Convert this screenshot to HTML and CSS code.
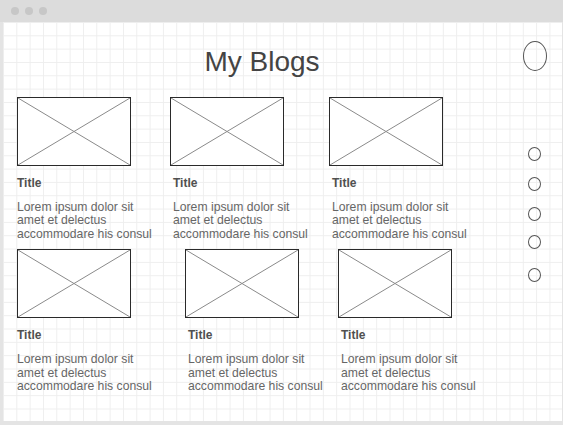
FILE: index.html
```html
<!DOCTYPE html>
<html lang="en">
<head>
<meta charset="utf-8">
<title>My Blogs</title>
<link rel="stylesheet" href="styles.css">
</head>
<body>
<div class="window">
  <div class="titlebar">
    <span class="win-dot"></span>
    <span class="win-dot"></span>
    <span class="win-dot"></span>
  </div>
  <div class="canvas">
    <main class="main">
      <h1 class="heading">My Blogs</h1>
      <div class="row">
        <article class="card">
          <div class="thumb"><svg viewBox="0 0 100 100" preserveAspectRatio="none"><line x1="0" y1="0" x2="100" y2="100" vector-effect="non-scaling-stroke"/><line x1="100" y1="0" x2="0" y2="100" vector-effect="non-scaling-stroke"/></svg></div>
          <h2 class="card-title">Title</h2>
          <p class="card-text">Lorem ipsum dolor sit amet et delectus accommodare his consul</p>
        </article>
        <article class="card card-r1c2 card-shift">
          <div class="thumb"><svg viewBox="0 0 100 100" preserveAspectRatio="none"><line x1="0" y1="0" x2="100" y2="100" vector-effect="non-scaling-stroke"/><line x1="100" y1="0" x2="0" y2="100" vector-effect="non-scaling-stroke"/></svg></div>
          <h2 class="card-title">Title</h2>
          <p class="card-text">Lorem ipsum dolor sit amet et delectus accommodare his consul</p>
        </article>
        <article class="card card-r1c3 card-shift">
          <div class="thumb"><svg viewBox="0 0 100 100" preserveAspectRatio="none"><line x1="0" y1="0" x2="100" y2="100" vector-effect="non-scaling-stroke"/><line x1="100" y1="0" x2="0" y2="100" vector-effect="non-scaling-stroke"/></svg></div>
          <h2 class="card-title">Title</h2>
          <p class="card-text">Lorem ipsum dolor sit amet et delectus accommodare his consul</p>
        </article>
      </div>
      <div class="row row-second">
        <article class="card">
          <div class="thumb"><svg viewBox="0 0 100 100" preserveAspectRatio="none"><line x1="0" y1="0" x2="100" y2="100" vector-effect="non-scaling-stroke"/><line x1="100" y1="0" x2="0" y2="100" vector-effect="non-scaling-stroke"/></svg></div>
          <h2 class="card-title">Title</h2>
          <p class="card-text">Lorem ipsum dolor sit amet et delectus accommodare his consul</p>
        </article>
        <article class="card card-r2c2 card-shift">
          <div class="thumb"><svg viewBox="0 0 100 100" preserveAspectRatio="none"><line x1="0" y1="0" x2="100" y2="100" vector-effect="non-scaling-stroke"/><line x1="100" y1="0" x2="0" y2="100" vector-effect="non-scaling-stroke"/></svg></div>
          <h2 class="card-title">Title</h2>
          <p class="card-text">Lorem ipsum dolor sit amet et delectus accommodare his consul</p>
        </article>
        <article class="card card-r2c3 card-shift">
          <div class="thumb"><svg viewBox="0 0 100 100" preserveAspectRatio="none"><line x1="0" y1="0" x2="100" y2="100" vector-effect="non-scaling-stroke"/><line x1="100" y1="0" x2="0" y2="100" vector-effect="non-scaling-stroke"/></svg></div>
          <h2 class="card-title">Title</h2>
          <p class="card-text">Lorem ipsum dolor sit amet et delectus accommodare his consul</p>
        </article>
      </div>
    </main>
    <aside class="side">
      <span class="avatar"></span>
      <span class="nav-dot nav-dot-first"></span>
      <span class="nav-dot"></span>
      <span class="nav-dot"></span>
      <span class="nav-dot nav-dot-tight"></span>
      <span class="nav-dot nav-dot-wide"></span>
    </aside>
  </div>
</div>
</body>
</html>
```

FILE: styles.css
```css
* {
  box-sizing: border-box;
}

html, body {
  margin: 0;
  padding: 0;
  background: #ffffff;
}

body {
  font-family: "Liberation Sans", Arial, sans-serif;
}

.window {
  width: 563px;
  height: 425px;
  background: #e4e4e4;
  display: flex;
  flex-direction: column;
}

.titlebar {
  height: 22px;
  flex: none;
  background: #dcdcdc;
  display: flex;
  align-items: center;
  gap: 6px;
  padding-left: 11px;
}

.win-dot {
  width: 8px;
  height: 8px;
  border-radius: 50%;
  background: #c7c7c7;
}

.canvas {
  flex: 1;
  margin: 0 1px 4px 3px;
  background-color: #ffffff;
  background-image:
    linear-gradient(to right, #eeeeee 1px, transparent 1px),
    linear-gradient(to bottom, #eeeeee 1px, transparent 1px);
  background-size: 13.33px 13.33px;
  display: flex;
}

.main {
  width: 518px;
  flex: none;
  padding-top: 23.5px;
}

.heading {
  margin: 0;
  text-align: center;
  font-weight: normal;
  font-size: 28px;
  line-height: 32px;
  color: #444444;
}

.row {
  display: flex;
  padding-left: 14px;
  margin-top: 19.5px;
}

.row-second {
  margin-top: 7.4px;
}

.card {
  width: 137px;
  flex: none;
}

.card-r1c2 { margin-left: 16px; }
.card-r1c3 { margin-left: 22px; }
.card-r2c2 { margin-left: 31px; }
.card-r2c3 { margin-left: 16px; }

.thumb {
  width: 114px;
  height: 69px;
  border: 1px solid #2a2a2a;
  background: #ffffff;
}

.thumb svg {
  display: block;
  width: 100%;
  height: 100%;
}

.thumb line {
  stroke: #8a8a8a;
  stroke-width: 1;
}

.card-title {
  margin: 9.5px 0 0;
  font-size: 12px;
  line-height: 14px;
  font-weight: bold;
  color: #505050;
}

.card-text {
  margin: 11px 0 0;
  font-size: 12.2px;
  line-height: 13.8px;
  color: #666666;
  width: 140px;
}

.card-shift .card-title,
.card-shift .card-text {
  padding-left: 3px;
}

.side {
  flex: 1;
  display: flex;
  flex-direction: column;
  align-items: flex-start;
  padding-top: 19px;
  padding-left: 2px;
}

.avatar {
  width: 24px;
  height: 30px;
  border: 1px solid #555555;
  border-radius: 50%;
}

.nav-dot {
  width: 13px;
  height: 14px;
  margin-left: 5px;
  margin-top: 16px;
  border: 1px solid #555555;
  border-radius: 50%;
}

.nav-dot-first { margin-top: 76px; }
.nav-dot-tight { margin-top: 14px; }
.nav-dot-wide { margin-top: 19px; }
```
